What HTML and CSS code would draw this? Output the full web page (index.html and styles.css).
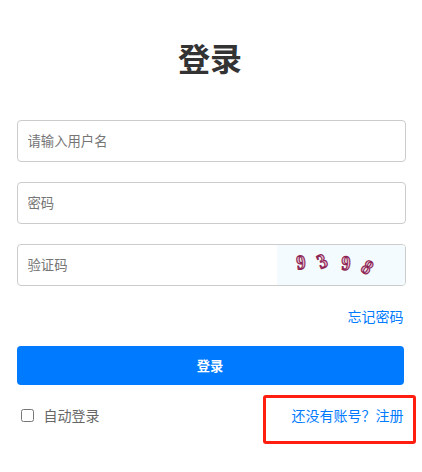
FILE: index.html
```html
<!DOCTYPE html>
<html lang="zh-CN">

<head>
    <meta charset="UTF-8">
    <meta name="viewport" content="width=device-width, initial-scale=1.0">
    <title>登录</title>
    <link rel="stylesheet" href="styles.css">
</head>

<body>
    <div class="login">
        <h1 class="title">登录</h1>
        <form class="form">
            <div class="field">
                <input type="text" placeholder="请输入用户名">
            </div>
            <div class="field">
                <input type="password" placeholder="密码">
            </div>
            <div class="field">
                <input type="text" placeholder="验证码">
                <svg class="captcha" width="128" height="40" viewBox="0 0 128 40">
                    <text transform="translate(24 17) rotate(-6) scale(.88 1)" y="7">9</text>
                    <text transform="translate(45 16) rotate(-24) scale(.88 1)" y="7">3</text>
                    <text transform="translate(69 18) rotate(2) scale(.88 1)" y="7">9</text>
                    <text transform="translate(90.5 22) rotate(34) scale(.9 1)" y="7">8</text>
                </svg>
            </div>
            <a class="forgot" href="#">忘记密码</a>
            <button class="submit" type="button">登录</button>
            <div class="options">
                <label class="auto">
                    <input type="checkbox">
                    <span>自动登录</span>
                </label>
                <a class="register" href="#">还没有账号？注册</a>
            </div>
        </form>
    </div>
</body>

</html>
```

FILE: styles.css
```css
* {
    box-sizing: border-box;
}

body {
    margin: 0;
    background-color: #fff;
    font-family: "Noto Sans CJK SC", sans-serif;
}

.login {
    width: 389px;
    margin-left: 17px;
    padding-top: 33px;
}

.title {
    width: 386px;
    margin: 0 0 39px;
    font-size: 32px;
    line-height: 48px;
    text-align: center;
    color: #333;
}

.form {
    display: flex;
    flex-direction: column;
}

.field {
    display: flex;
    height: 42px;
    margin-bottom: 20px;
    border: 1px solid #ccc;
    border-radius: 4px;
    overflow: hidden;
}

.field input {
    flex: 1;
    min-width: 0;
    padding: 0 10px 2px 9.5px;
    border: 0;
    outline: none;
    background: transparent;
    font-family: inherit;
    font-size: 13.333px;
}

.field input::placeholder {
    color: #757575;
}

.captcha {
    flex: none;
    background-color: #f3fbfe;
}

.captcha text {
    font-family: "Liberation Serif", serif;
    font-size: 20.5px;
    font-weight: bold;
    text-anchor: middle;
    fill: #e3bfd0;
    stroke: #8e2453;
    stroke-width: 1.2px;
}

.forgot,
.register {
    color: #007bff;
    font-size: 14px;
    line-height: 20px;
    text-decoration: none;
}

.forgot {
    align-self: flex-end;
    margin: 0 2.5px 20px 0;
}

.submit {
    width: 387px;
    height: 39px;
    padding: 0 1px 0 0;
    border: 0;
    border-radius: 4px;
    background-color: #007bff;
    color: #fff;
    font-family: inherit;
    font-size: 13.333px;
    font-weight: bold;
}

.options {
    display: flex;
    justify-content: space-between;
    margin-top: 10px;
}

.auto {
    display: flex;
    align-items: center;
    height: 41px;
    color: #666;
    font-size: 14px;
}

.auto span {
    padding-bottom: 1px;
}

.auto input {
    width: 13px;
    height: 13px;
    margin: 0 9.5px 0 4px;
}

.register {
    width: 153px;
    height: 49px;
    margin-right: -10px;
    padding: 7px 9.5px 0 0;
    border: 3px solid #ff1e10;
    border-radius: 3px;
    text-align: right;
}
```
